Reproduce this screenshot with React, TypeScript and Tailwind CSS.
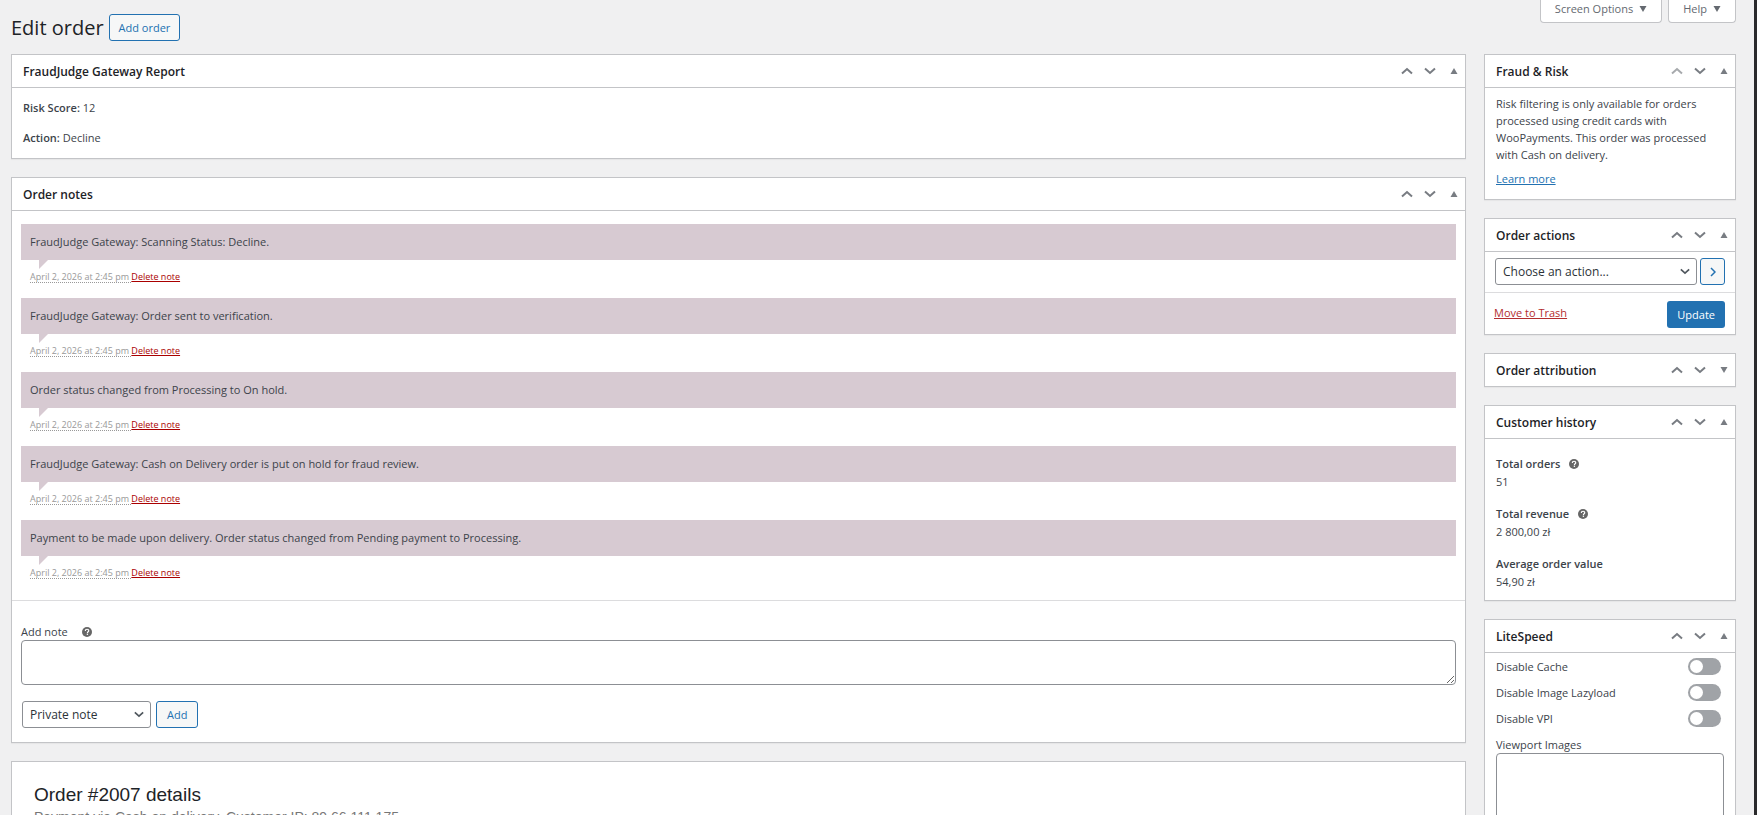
import type { ReactNode } from 'react';

const NOTES = [
  'FraudJudge Gateway: Scanning Status: Decline.',
  'FraudJudge Gateway: Order sent to verification.',
  'Order status changed from Processing to On hold.',
  'FraudJudge Gateway: Cash on Delivery order is put on hold for fraud review.',
  'Payment to be made upon delivery. Order status changed from Pending payment to Processing.',
];

const TOGGLES = ['Disable Cache', 'Disable Image Lazyload', 'Disable VPI'];

function Chevron({ down = false, className = 'w-3 h-2' }: { down?: boolean; className?: string }) {
  return (
    <svg viewBox="0 0 12 8" className={className} fill="none" stroke="currentColor" strokeWidth="2">
      <path d={down ? 'M1 1.5 6 6l5-4.5' : 'M1 6.5 6 2l5 4.5'} />
    </svg>
  );
}

function Triangle({ down = false }: { down?: boolean }) {
  return (
    <svg viewBox="0 0 8 6" className="w-2 h-[6px]" fill="currentColor">
      <path d={down ? 'M.5 0h7L4 6z' : 'M.5 6h7L4 0z'} />
    </svg>
  );
}

function HelpTip() {
  return (
    <svg viewBox="0 0 20 20" className="w-[10px] h-[10px] text-[#666]" fill="currentColor" aria-label="Help">
      <circle cx="10" cy="10" r="10" />
      <path
        d="M6.6 7.8c0-2 1.5-3.3 3.5-3.3s3.4 1.2 3.4 2.9c0 2.2-2.6 2.3-2.6 4.4"
        fill="none"
        stroke="#fff"
        strokeWidth="2.4"
      />
      <rect x="9.5" y="13.2" width="2.6" height="2.6" fill="#fff" />
    </svg>
  );
}

interface BoxProps {
  title: string;
  first?: boolean;
  closed?: boolean;
  children?: ReactNode;
}

function Box({ title, first, closed, children }: BoxProps) {
  return (
    <section className="bg-white border border-[#c3c4c7] shadow-[0_1px_1px_rgba(0,0,0,0.04)]">
      <header
        className={`flex items-center h-8 pl-[11px] pr-[7px] ${closed ? '' : 'box-content border-b border-[#c3c4c7]'}`}
      >
        <h2 className="flex-1 text-[12px] font-semibold text-[#1d2327]">{title}</h2>
        <div className="flex items-center text-[#787c82]">
          <button type="button" aria-label="Move up" className={first ? 'text-[#a7aaad]' : ''}>
            <Chevron />
          </button>
          <button type="button" aria-label="Move down" className="ml-[11px]">
            <Chevron down />
          </button>
          <button type="button" aria-label="Toggle panel" className="ml-[14px]">
            <Triangle down={closed} />
          </button>
        </div>
      </header>
      {children}
    </section>
  );
}

function Select({ label, value, className }: { label: string; value: string; className: string }) {
  return (
    <div className={`relative ${className}`}>
      <select
        aria-label={label}
        className="appearance-none w-full h-[27px] pl-[7px] pr-6 border border-[#8c8f94] rounded-[3px] bg-white text-[12px] text-[#2c3338]"
      >
        <option>{value}</option>
      </select>
      <Chevron down className="absolute right-[7px] top-[10px] w-[10px] h-[7px] text-[#50575e] pointer-events-none" />
    </div>
  );
}

const outlineButton =
  'h-[27px] border border-[#2271b1] rounded-[3px] bg-[#f6f7f7] text-[#2271b1] text-[11px]';

const screenTab =
  'flex items-center gap-[6px] h-[23px] px-[14px] pb-[5px] bg-white border border-t-0 border-[#c3c4c7] rounded-b-[4px]';

export default function App() {
  return (
    <div className="h-screen overflow-hidden bg-[#f0f0f1] border-r-3 border-[#2a2a2c] pl-[11px] pr-[18px] font-['Open_Sans','Noto_Sans',sans-serif] text-[11px] leading-[17px] text-[#3c434a]">
      <div className="flex items-start justify-between h-[54px]">
        <div className="flex items-center gap-[5px] pt-[14px]">
          <h1 className="text-[20px] leading-[27px] text-[#1d2327]">Edit order</h1>
          <button type="button" className={`${outlineButton} px-[9px]`}>
            Add order
          </button>
        </div>
        <div className="flex gap-[6px] text-[#646970]">
          <button type="button" className={screenTab}>
            Screen Options
            <Triangle down />
          </button>
          <button type="button" className={screenTab}>
            Help
            <Triangle down />
          </button>
        </div>
      </div>

      <div className="flex items-start gap-[18px]">
        <main className="flex-1 min-w-0 flex flex-col gap-[18px]">
          <Box title="FraudJudge Gateway Report">
            <div className="flex flex-col gap-[13px] px-[11px] pt-[11px] pb-3">
              <p>
                <strong className="font-semibold">Risk Score:</strong> 12
              </p>
              <p>
                <strong className="font-semibold">Action:</strong> Decline
              </p>
            </div>
          </Box>

          <Box title="Order notes">
            <ul className="flex flex-col gap-[15px] px-[9px] pt-[13px] pb-[21px]">
              {NOTES.map((note) => (
                <li key={note}>
                  <div className="relative h-9 flex items-center px-[9px] pb-[2px] bg-[#d7cad2]">
                    <p>{note}</p>
                    {/* speech bubble tail */}
                    <svg viewBox="0 0 9 9" className="absolute left-[18px] top-full w-[9px] h-[9px]" fill="#d7cad2">
                      <path d="M0 0h9L0 9z" />
                    </svg>
                  </div>
                  <p className="flex pt-3 px-[9px] text-[9px] leading-[10px] text-[#999]">
                    <span className="border-b border-dotted border-[#999] whitespace-pre">April 2, 2026 at 2:45 pm </span>
                    <a href="#delete" className="text-[#a00] underline">
                      Delete note
                    </a>
                  </p>
                </li>
              ))}
            </ul>
            <div className="border-t border-[#dcdcde] px-[9px] pt-[22px] pb-[14px]">
              <div className="flex items-center gap-[14px]">
                <label htmlFor="add-note">Add note</label>
                <HelpTip />
              </div>
              <textarea
                id="add-note"
                className="block w-full h-[45px] border border-[#8c8f94] rounded-[4px] bg-white"
              />
              <div className="flex items-center gap-[5px] pt-4 pl-px">
                <Select label="Note type" value="Private note" className="w-[129px]" />
                <button type="button" className={`${outlineButton} px-[10px]`}>
                  Add
                </button>
              </div>
            </div>
          </Box>

          <section className="bg-white border border-[#c3c4c7] px-[22px] pt-[21px] pb-6 font-['Liberation_Sans',sans-serif]">
            <h2 className="text-[19px] leading-6 text-[#1d2327]">Order #2007 details</h2>
            <p className="text-[14px] leading-5 text-[#777]">
              Payment via Cash on delivery. Customer IP: 89.66.111.175
            </p>
          </section>
        </main>

        <aside className="w-[252px] shrink-0 flex flex-col gap-[18px]">
          <Box title="Fraud & Risk" first>
            <div className="px-[11px] pt-[7px] pb-3">
              <p>
                Risk filtering is only available for orders processed using credit cards with WooPayments. This order
                was processed with Cash on delivery.
              </p>
              <a href="#learn" className="block pt-[7px] text-[#2271b1] underline">
                Learn more
              </a>
            </div>
          </Box>

          <Box title="Order actions">
            <div className="flex items-center gap-[3px] px-[10px] pt-[6px] pb-[7px]">
              <Select label="Order action" value="Choose an action..." className="flex-1" />
              <button
                type="button"
                aria-label="Apply"
                className={`${outlineButton} w-[25px] flex items-center justify-center`}
              >
                <svg viewBox="0 0 6 10" className="w-[6px] h-[10px]" fill="none" stroke="currentColor" strokeWidth="1.5">
                  <path d="M1 1l4 4-4 4" />
                </svg>
              </button>
            </div>
            <div className="flex items-center justify-between border-t border-[#dcdcde] pl-[9px] pr-[10px] pt-2 pb-[6px]">
              <a href="#trash" className="pb-[5px] text-[#b32d2e] underline">
                Move to Trash
              </a>
              <button type="button" className="h-[27px] px-[10px] rounded-[3px] bg-[#2271b1] text-white font-medium">
                Update
              </button>
            </div>
          </Box>

          <Box title="Order attribution" closed />

          <Box title="Customer history">
            <dl className="px-[11px] pt-4 pb-[9px] leading-[18px]">
              <dt className="flex items-center gap-[9px] font-semibold">
                Total orders <HelpTip />
              </dt>
              <dd className="pb-[14px]">51</dd>
              <dt className="flex items-center gap-[9px] font-semibold">
                Total revenue <HelpTip />
              </dt>
              <dd className="pb-[14px]">2 800,00 zł</dd>
              <dt className="font-semibold">Average order value</dt>
              <dd>54,90 zł</dd>
            </dl>
          </Box>

          <Box title="LiteSpeed">
            <div className="px-[11px] pt-[5px] pb-3">
              {TOGGLES.map((name) => (
                <label key={name} className="flex items-center justify-between pr-[3px] pb-[9px]">
                  {name}
                  <input
                    type="checkbox"
                    role="switch"
                    className="appearance-none flex items-center w-[33px] h-[17px] px-[2px] rounded-full bg-[#a0a3a7] before:size-[13px] before:rounded-full before:bg-white checked:bg-[#2271b1] checked:justify-end"
                  />
                </label>
              ))}
              <label htmlFor="viewport-images" className="block">
                Viewport Images
              </label>
              <textarea
                id="viewport-images"
                className="block w-full h-24 border border-[#8c8f94] rounded-[4px] bg-white"
              />
            </div>
          </Box>
        </aside>
      </div>
    </div>
  );
}
